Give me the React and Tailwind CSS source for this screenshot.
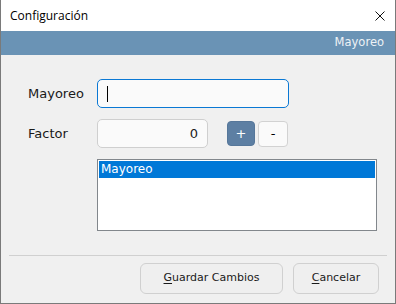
export default function App() {
  const font = { fontFamily: '"DejaVu Sans", sans-serif' };
  return (
    <div className="w-[396px] h-[304px] bg-[#f0f0f0] border-x border-b border-[#7a7a7a] flex flex-col overflow-hidden">
      {/* title bar */}
      <div className="h-[31px] bg-white flex items-center justify-between pl-[9px] pr-[10px] shrink-0">
        <span className="text-[12px] text-black font-['Segoe_UI','Open_Sans',sans-serif]">Configuración</span>
        <svg width="10" height="10" viewBox="0 0 10 10" className="mt-[1px]">
          <path d="M0.5 0.5 L9.5 9.5 M9.5 0.5 L0.5 9.5" stroke="#111" strokeWidth="1" />
        </svg>
      </div>
      {/* band */}
      <div className="h-[24px] bg-[#6a93b5] flex items-center justify-end pr-[11px] shrink-0">
        <span className="text-[11.5px] text-[#eef2f6]" style={font}>Mayoreo</span>
      </div>

      <div className="flex flex-col pl-[27px] pt-[24px]" style={font}>
        <div className="flex items-center">
          <label className="w-[69px] text-[13px] text-[#1a1a1a]">Mayoreo</label>
          <div className="w-[192px] h-[29px] rounded-[5px] border border-[#0a78d4] bg-[#fafafa] flex items-center pl-[9px]">
            <div className="w-px h-[16px] bg-black" />
          </div>
        </div>

        <div className="flex items-center mt-[11px]">
          <label className="w-[69px] text-[13px] text-[#1a1a1a]">Factor</label>
          <div className="w-[111px] h-[29px] rounded-[5px] border border-[#cfcfcf] bg-[#fafafa] flex items-center justify-end pr-[9px] text-[13px] text-[#1a1a1a]">
            0
          </div>
          <button className="ml-[19px] w-[28px] h-[25px] rounded-[4px] bg-[#5d7fa3] border border-[#56779a] text-white text-[13px] flex items-center justify-center">
            +
          </button>
          <button className="ml-[3px] w-[30px] h-[26px] rounded-[4px] bg-[#fafafa] border border-[#d2d2d2] text-black text-[13px] flex items-center justify-center">
            -
          </button>
        </div>

        <div className="ml-[69px] mt-[11px] w-[280px] h-[72px] bg-white border border-[#82878c] p-px">
          <div className="h-[17px] bg-[#0078d7] text-white text-[12px] leading-[17px] pl-[2px]">Mayoreo</div>
        </div>
      </div>

      <div className="mx-[8px] mt-[24px] h-px bg-[#d0d0d0]" />

      <div className="flex justify-end gap-[10px] pr-[16px] mt-[7px]" style={font}>
        <button className="w-[143px] h-[31px] rounded-[6px] border border-[#d0d0d0] bg-[#efefef] text-[11px] text-[#1a1a1a]">
          <span className="underline underline-offset-2">G</span>uardar Cambios
        </button>
        <button className="w-[86px] h-[31px] rounded-[6px] border border-[#d0d0d0] bg-[#efefef] text-[11px] text-[#1a1a1a]">
          <span className="underline underline-offset-2">C</span>ancelar
        </button>
      </div>
    </div>
  );
}
